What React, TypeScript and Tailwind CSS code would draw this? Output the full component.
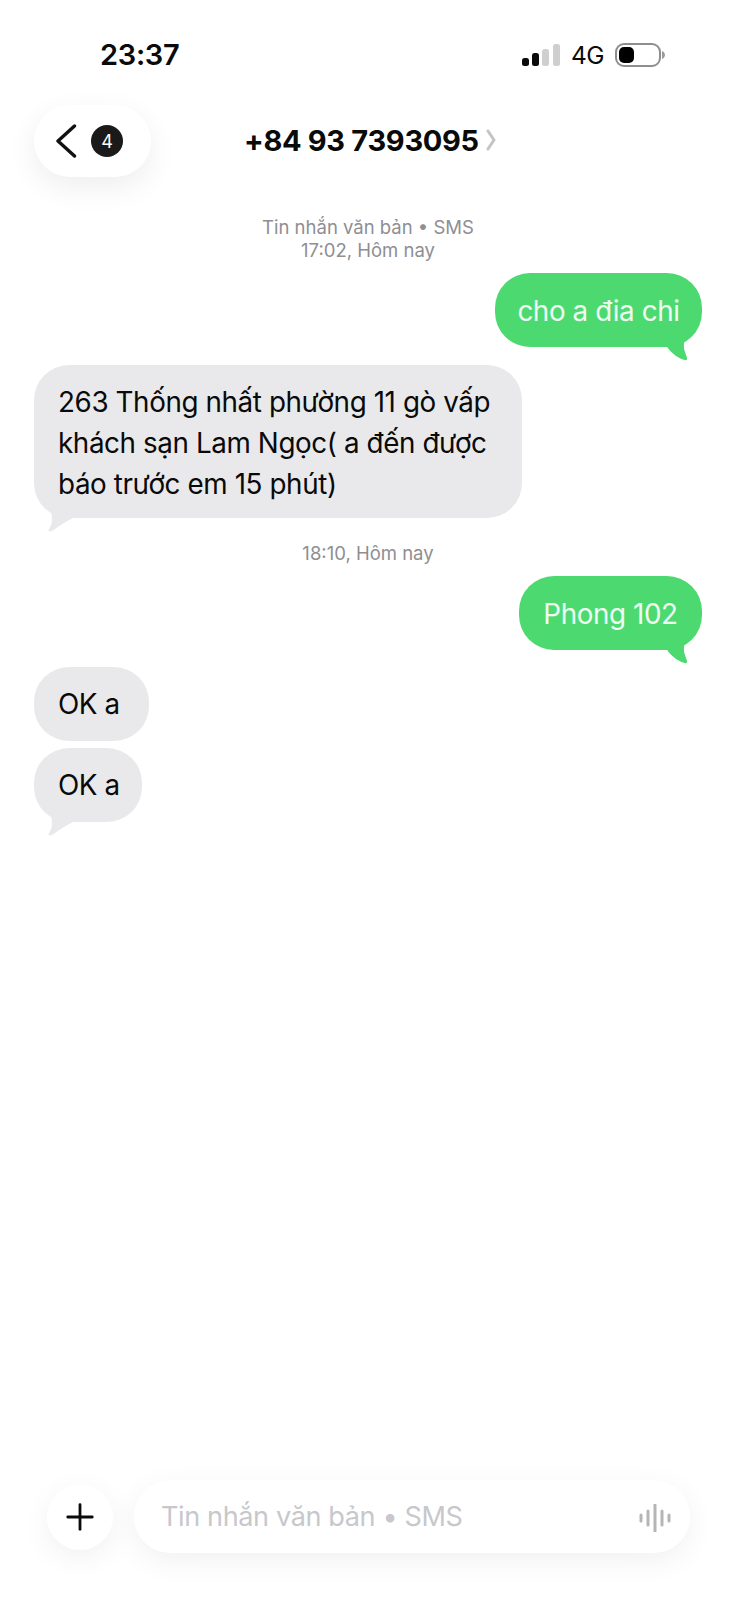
import { Plus } from "lucide-react";

const font = { fontFamily: "Inter, 'Liberation Sans', sans-serif" };

// Tail of a sent bubble, hangs off the bottom right corner
function SentTail() {
  return (
    <svg className="absolute right-[12px] bottom-[-14px]" width="26" height="26" viewBox="0 0 26 26">
      <path d="M2 10 L22 0 C20 6 19 12 21 17 C22 20 24 24 22.5 25 C21 25.8 16 23.5 12 21 C8 18 4 14 2 10 Z" fill="#4cd970" />
    </svg>
  );
}

// Tail of a received bubble, bottom left corner
function ReceivedTail() {
  return (
    <svg className="absolute left-[13px] bottom-[-14px]" width="28" height="26" viewBox="0 0 28 26">
      <path d="M2 0 L26 12 C20 15 12 20 5 25 C3 26 1 25 1.5 24 C4 20 5 17 5 12 C5 7 3 4 2 0 Z" fill="#e9e9eb" />
    </svg>
  );
}

function Sent({ text, className }: { text: string; className?: string }) {
  return (
    <div className={`relative self-end h-[74px] pt-1 rounded-[35px] bg-[#4cd970] flex items-center justify-center text-[27.8px] tracking-[-0.4px] text-white/90 ${className ?? ""}`}>
      {text}
      <SentTail />
    </div>
  );
}

function Received({ lines, tail, className }: { lines: string[]; tail?: boolean; className?: string }) {
  return (
    <div className={`relative self-start rounded-[35px] bg-[#e9e9eb] pl-6 text-[27.8px] leading-[41px] tracking-[-0.4px] text-[#0a0a0a] ${className ?? ""}`}>
      {lines.map((l) => (
        <div key={l} className="whitespace-nowrap">{l}</div>
      ))}
      {tail && <ReceivedTail />}
    </div>
  );
}

export default function App() {
  return (
    <div className="w-[736px] h-[1600px] bg-white flex flex-col overflow-hidden" style={font}>
      {/* Status bar */}
      <div className="h-[105px] pt-[37px] pl-[100px] pr-[71px] flex items-start justify-between">
        <span className="text-[29px] leading-[36px] font-semibold tracking-[-0.3px] text-[#0a0a0a]">23:37</span>
        <div className="flex items-center gap-[11px] h-[36px]">
          <svg width="38" height="22" viewBox="0 0 38 22">
            <rect x="0" y="14" width="7" height="8" rx="2.5" fill="#0a0a0a" />
            <rect x="10" y="9" width="7" height="13" rx="2.5" fill="#0a0a0a" />
            <rect x="20" y="5" width="7" height="17" rx="2.5" fill="#cfcfcf" />
            <rect x="31" y="0" width="7" height="22" rx="2.5" fill="#cfcfcf" />
          </svg>
          <span className="text-[24.5px] leading-none tracking-[-0.5px] text-[#0a0a0a]">4G</span>
          <svg width="50" height="24" viewBox="0 0 50 24">
            <rect x="1" y="1" width="44" height="22" rx="8" fill="#fff" stroke="#8e8e8e" strokeWidth="2" />
            <rect x="4" y="4" width="15" height="16" rx="5" fill="#000" />
            <path d="M47 8 C49 9 50 10.5 50 12 C50 13.5 49 15 47 16 Z" fill="#9a9a9a" />
          </svg>
        </div>
      </div>

      {/* Header */}
      <div className="h-[72px] pl-[34px] flex items-center">
        <div className="w-[117px] h-[72px] rounded-[36px] bg-white shadow-[0_10px_30px_rgba(0,0,0,0.07)] flex items-center pl-[21px] gap-[14px]">
          <svg width="22" height="34" viewBox="0 0 22 34">
            <path d="M19.5 2 L3 17 L19.5 32" fill="none" stroke="#111" strokeWidth="3.4" strokeLinecap="round" strokeLinejoin="round" />
          </svg>
          <span className="w-8 h-8 rounded-full bg-[#1a1a1a] text-white text-[18px] flex items-center justify-center">4</span>
        </div>
        <div className="ml-[93px] mb-[2px] flex items-center gap-[7px]">
          <span className="text-[29px] leading-none font-bold tracking-[-0.3px] text-[#0a0a0a]">+84 93 7393095</span>
          <svg width="10" height="22" viewBox="0 0 10 22">
            <path d="M2 2 L8 11 L2 20" fill="none" stroke="#c4c4c4" strokeWidth="3" strokeLinecap="round" strokeLinejoin="round" />
          </svg>
        </div>
      </div>

      {/* Messages */}
      <div className="flex-1 flex flex-col pl-[34px] pr-[34px]">
        <div className="mt-[39px] text-center text-[18.5px] leading-[23px] text-[#8e8e93]">
          <div>Tin nhắn văn bản • SMS</div>
          <div>17:02, Hôm nay</div>
        </div>
        <Sent text="cho a đia chi" className="mt-[11px] w-[207px]" />
        <Received className="mt-[18px] pt-[17px] pb-[13px] pr-[32px]" tail lines={["263 Thống nhất phường 11 gò vấp", "khách sạn Lam Ngọc( a đến được", "báo trước em 15 phút)"]} />
        <div className="mt-[24px] text-center text-[18.5px] leading-[23px] text-[#8e8e93]">18:10, Hôm nay</div>
        <Sent text="Phong 102" className="mt-[11px] w-[183px]" />
        <Received className="mt-[17px] py-[16.5px] pr-[29px]" lines={["OK a"]} />
        <Received className="mt-[7px] py-[16.5px] pr-[22px]" tail lines={["OK a"]} />
      </div>

      {/* Composer */}
      <div className="h-[120px] pl-[47px] pr-[46px] pt-[0px] flex items-start gap-[21px]">
        <div className="w-[66px] h-[66px] mt-[4px] rounded-full bg-white shadow-[0_8px_30px_rgba(0,0,0,0.06)] flex items-center justify-center">
          <Plus size={42} strokeWidth={1.6} color="#0a0a0a" />
        </div>
        <div className="flex-1 h-[73px] pt-[2px] rounded-[36px] bg-white shadow-[0_8px_30px_rgba(0,0,0,0.06)] flex items-center justify-between pl-[27px] pr-[19px]">
          <span className="text-[27.1px] tracking-[-0.4px] text-[#c7c7cc]">Tin nhắn văn bản • SMS</span>
          <svg width="32" height="28" viewBox="0 0 32 28" stroke="#b5b5b5" strokeWidth="3" strokeLinecap="round">
            <path d="M2 11 V17 M9 7 V21 M16 1 V27 M23 7 V21 M30 11 V17" />
          </svg>
        </div>
      </div>
    </div>
  );
}
